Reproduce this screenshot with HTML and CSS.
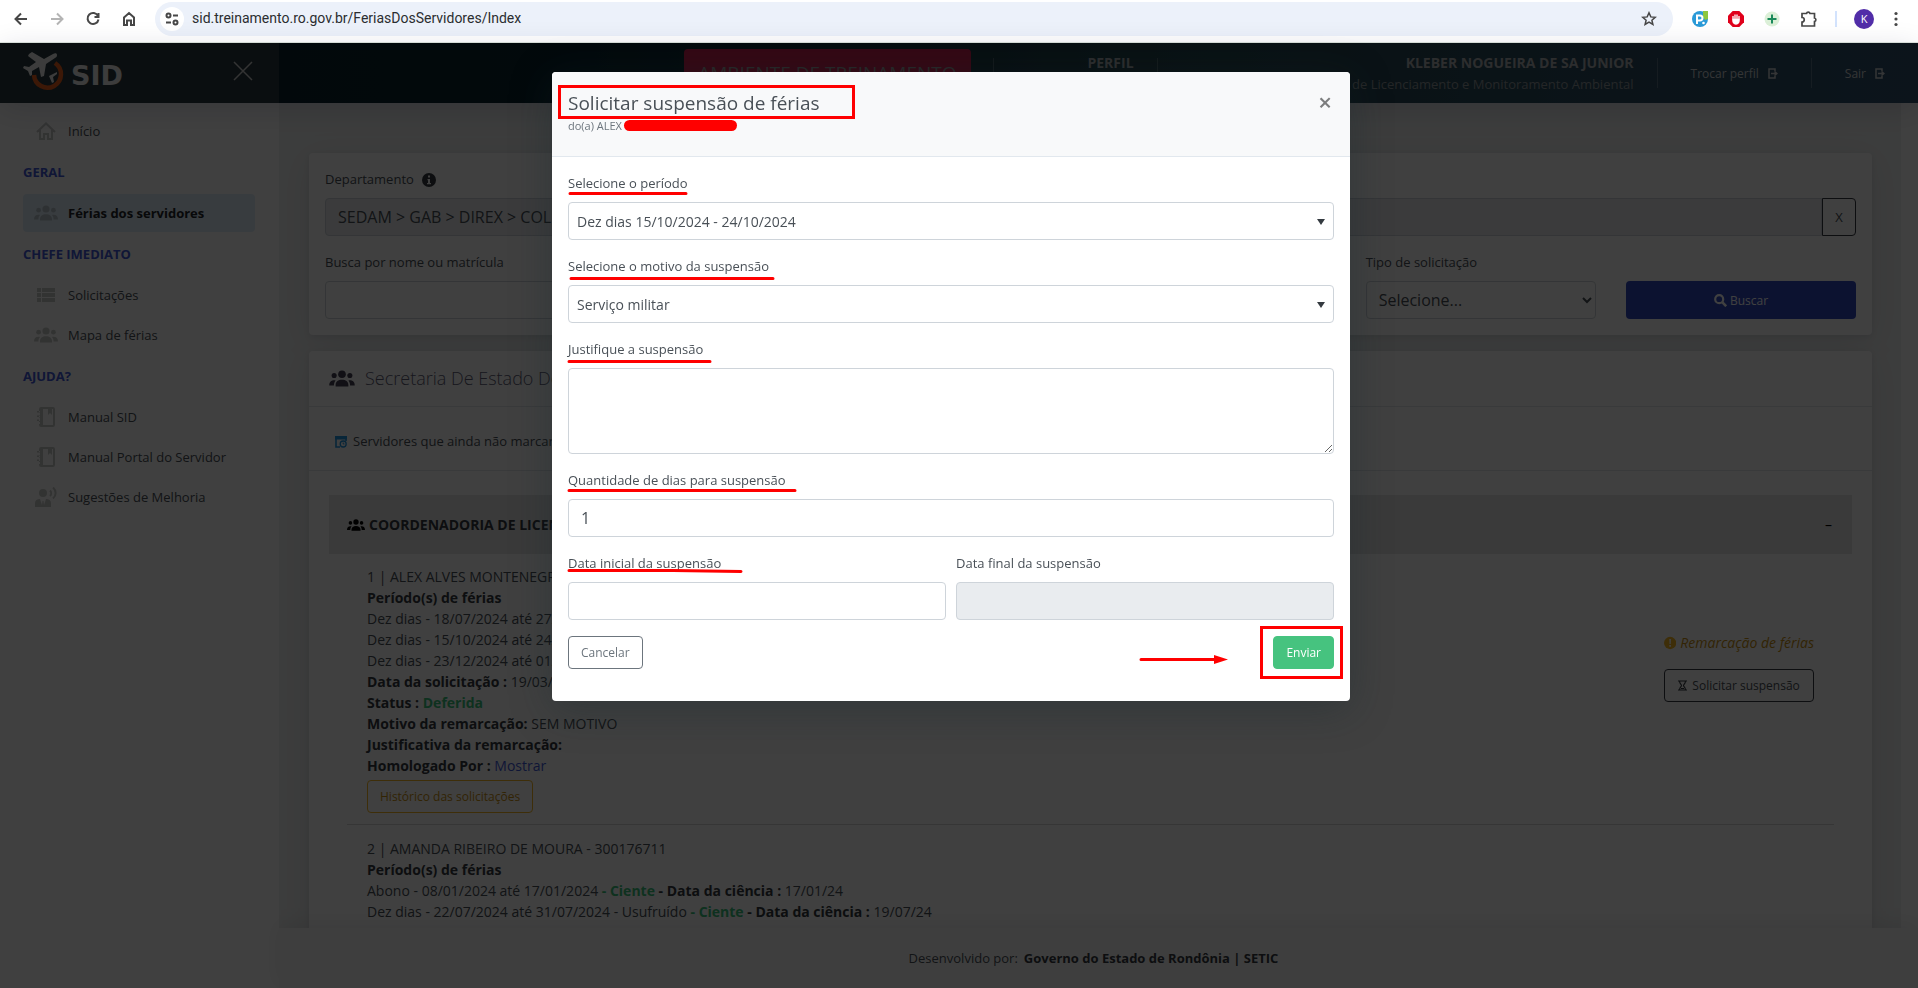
FILE: index.html
```html
<!DOCTYPE html>
<html lang="pt-BR">
<head>
<meta charset="utf-8">
<title>SID - Férias dos servidores</title>
<link rel="stylesheet" href="styles.css">
</head>
<body>
<svg class="defs" aria-hidden="true">
  <symbol id="users" viewBox="0 0 24 16">
    <circle cx="12" cy="4" r="3.6"/><circle cx="4.6" cy="5.2" r="2.4"/><circle cx="19.4" cy="5.2" r="2.4"/>
    <path d="M6 15.500v-1.500c0-3 2.500-4.800 6-4.800s6 1.800 6 4.800v1.500zM0 14.500c0-2.800 1.400-4.800 4.600-4.800.6 0 1 .1 1.400.2C4.900 11.200 4.400 12.600 4.400 14.500zM24 14.500c0-2.800-1.400-4.800-4.600-4.800-.6 0-1 .1-1.400.2 1.100 1.300 1.600 2.700 1.600 4.600z"/>
  </symbol>
  <symbol id="book" viewBox="0 0 18 20">
    <path fill-rule="evenodd" d="M4 0h12a2 2 0 0 1 2 2v16a2 2 0 0 1-2 2H4a2 2 0 0 1-2-2v-1h1v-2H2v-2.500h1v-2H2V8h1V6H2V2a2 2 0 0 1 2-2zm2 2v16h10V2h-1v6l-2-2-2 2V2zM0 4h3v1.500H0zM0 8.500h3V10H0zM0 12.500h3V14H0z"/>
  </symbol>
  <symbol id="exit" viewBox="0 0 10 11">
    <path fill="none" stroke="currentColor" stroke-width="1.500" d="M7 3V1H1v9h6V8"/><path d="M3 4.700h3.500V2.500l3.500 3-3.500 3V6.300H3z"/>
  </symbol>
</svg>

<div class="browser">
  <button class="nav-btn" aria-label="Voltar"><svg width="16" height="16" viewBox="0 0 16 16"><path d="M14 8H3M8 2.500L2.500 8 8 13.500"/></svg></button>
  <button class="nav-btn off" aria-label="Avançar"><svg width="16" height="16" viewBox="0 0 16 16"><path d="M2 8h11M8 2.500L13.500 8 8 13.500"/></svg></button>
  <button class="nav-btn" aria-label="Recarregar"><svg width="16" height="16" viewBox="0 0 16 16"><path d="M13 5A5.500 5.500 0 1 0 13.500 8.500M13.500 2v4h-4"/></svg></button>
  <button class="nav-btn" aria-label="Página inicial"><svg width="16" height="16" viewBox="0 0 16 16"><path d="M3 6.500L8 2l5 4.500V14h-3v-4.500H6V14H3z"/></svg></button>
  <div class="address">
    <span class="site-info"><svg width="14" height="14" viewBox="0 0 14 14"><circle cx="3.500" cy="3.500" r="2"/><path d="M8 3.500h5M1 10.500h5"/><circle cx="10.500" cy="10.500" r="2"/></svg></span>
    <input class="url" aria-label="Endereço" value="sid.treinamento.ro.gov.br/FeriasDosServidores/Index">
    <button class="star" aria-label="Favoritar"><svg width="16" height="16" viewBox="0 0 16 16"><path d="M8 1.800l1.800 4.100 4.400.4-3.300 2.900 1 4.300L8 11.200l-3.900 2.300 1-4.300-3.300-2.900 4.400-.4z"/></svg></button>
  </div>
  <div class="extensions">
    <svg width="16" height="16" viewBox="0 0 16 16"><circle cx="8" cy="8" r="8" fill="#2a9ad8"/><path d="M11 0h5v8l-3 1-2-3z" fill="#8cc63f"/><path d="M5 13V4.500h3a2.300 2.300 0 0 1 0 5H5" fill="none" stroke="#fff" stroke-width="2"/><circle cx="11.500" cy="12" r="1.300" fill="#fff"/></svg>
    <svg width="16" height="16" viewBox="0 0 16 16"><path d="M4.700 0h6.600L16 4.700v6.600L11.300 16H4.700L0 11.300V4.700z" fill="#e0001b"/><path d="M5 9.500V5M7 8V3.500M9 8V3.500M11 9V5M4.800 8.500h6.400c0 2.500-1 4.500-3.200 4.500s-3.200-2-3.200-4.500z" fill="#fff" stroke="#fff" stroke-width="1.300"/></svg>
    <svg width="16" height="16" viewBox="0 0 16 16"><circle cx="8" cy="8" r="7.500" fill="#dcf0d8"/><path d="M8 3.500v9M3.500 8h9" stroke="#1b8a5a" stroke-width="2"/></svg>
    <svg width="18" height="18" viewBox="0 0 18 18"><path d="M2 3.500h4.500a1.800 1.800 0 0 1 3.500 0h4.500V8a1.800 1.800 0 0 1 0 3.500v4.500H2v-4a2.200 2.200 0 0 0 0-4.500z" fill="none" stroke="#474747" stroke-width="1.700"/></svg>
    <span class="bar"></span>
    <button class="avatar" aria-label="Perfil">K</button>
    <button class="menu" aria-label="Menu"><svg width="4" height="16" viewBox="0 0 4 16" fill="#474747"><circle cx="2" cy="2.500" r="1.600"/><circle cx="2" cy="8" r="1.600"/><circle cx="2" cy="13.500" r="1.600"/></svg></button>
  </div>
</div>

<div class="app">
  <header class="top">
    <div class="brand">
      <svg class="logo" width="46" height="42" viewBox="0 0 46 42">
        <path d="M32 11a13.500 13.500 0 1 1-21 12" fill="none" stroke="#f0601c" stroke-width="4.500"/>
        <g fill="#f0f0f0"><path d="M6 2l3-2 12 7 9-5c2-1 4-1 4 1s-1 2-2 3l-9 6-2 12-3 1-2-10-7 4v4l-2 1-2-5-5-3 1-2 5 1 7-5L5 4z"/><path d="M34 20l-8 4 3 7 2-1-1-5 4-3z"/></g>
      </svg>
      <span class="brand-name">SID</span>
      <button class="side-close" aria-label="Fechar menu"><svg width="20" height="20" viewBox="0 0 20 20"><path d="M1 1l18 18M19 1L1 19"/></svg></button>
    </div>
    <div class="top-right">
      <span class="env">AMBIENTE DE TREINAMENTO</span>
      <div class="cell profile"><strong>PERFIL</strong></div>
      <div class="cell user"><strong>KLEBER NOGUEIRA DE SA JUNIOR</strong><span>Coordenadoria de Licenciamento e Monitoramento Ambiental</span></div>
      <a class="cell link" href="#">Trocar perfil <svg width="10" height="11"><use href="#exit"/></svg></a>
      <a class="cell link" href="#">Sair <svg width="10" height="11"><use href="#exit"/></svg></a>
    </div>
  </header>
  <div class="body">
    <nav class="side">
      <a href="#"><span class="ico"><svg width="20" height="18" viewBox="0 0 20 18"><path d="M1 10l9-8.500L19 10M4 8v9h4v-5h4v5h4V8" fill="none" stroke="#c8cac8" stroke-width="2"/></svg></span>Início</a>
      <h2>GERAL</h2>
      <a href="#" class="active"><span class="ico"><svg width="24" height="16"><use href="#users"/></svg></span>Férias dos servidores</a>
      <h2>CHEFE IMEDIATO</h2>
      <a href="#"><span class="ico"><svg width="18" height="14" viewBox="0 0 18 14"><path d="M0 0h4v4H0zM5 0h13v4H5zM0 5h4v4H0zM5 5h13v4H5zM0 10h4v4H0zM5 10h13v4H5z"/></svg></span>Solicitações</a>
      <a href="#"><span class="ico"><svg width="24" height="16"><use href="#users"/></svg></span>Mapa de férias</a>
      <h2>AJUDA?</h2>
      <a href="#"><span class="ico"><svg width="18" height="20"><use href="#book"/></svg></span>Manual SID</a>
      <a href="#"><span class="ico"><svg width="18" height="20"><use href="#book"/></svg></span>Manual Portal do Servidor</a>
      <a href="#"><span class="ico"><svg width="22" height="20" viewBox="0 0 22 20"><circle cx="8" cy="6" r="4"/><path d="M0 20v-4c0-2.500 2-4 5-4l2 6 .5-4h1l.5 4 2-6c3 0 5 1.500 5 4v4z"/><path d="M15 3.500c1.500 1.500 1.500 4 0 5.500M18 0.500c3.500 3 3.500 8 0 11" fill="none" stroke="#c8cac8" stroke-width="2"/></svg></span>Sugestões de Melhoria</a>
    </nav>
    <div class="main">
      <main class="content">
        <form class="card filter">
          <div class="field wide">
            <label for="dep">Departamento <svg width="14" height="14" viewBox="0 0 14 14"><circle cx="7" cy="7" r="7" fill="#343a40"/><path d="M6 2.500h2v2H6zM5.500 6H8v4h1v1.300H5V10h1V7.300h-.5z" fill="#fff"/></svg></label>
            <div class="group"><input id="dep" class="control" readonly value="SEDAM &gt; GAB &gt; DIREX &gt; COLMAM"><button type="button" class="clear">X</button></div>
          </div>
          <div class="field name"><label for="busca">Busca por nome ou matrícula</label><input id="busca" class="control"></div>
          <div class="field"><label for="tipo">Tipo de solicitação</label><select id="tipo" class="control"><option>Selecione...</option></select></div>
          <button type="button" class="search"><svg width="13" height="13" viewBox="0 0 13 13"><circle cx="5.200" cy="5.200" r="4" fill="none" stroke="#fff" stroke-width="2.200"/><path d="M8.200 8.200l4 4" stroke="#fff" stroke-width="2.600"/></svg> Buscar</button>
        </form>
        <section class="card list">
          <h1><svg width="26" height="17"><use href="#users"/></svg>Secretaria De Estado Do Desenvolvimento Ambiental</h1>
          <div class="pending"><svg width="12" height="13" viewBox="0 0 12 13"><path d="M5 12H1V2h10v4" fill="none" stroke="#2196e3" stroke-width="1.600"/><path d="M0 1h12v3.500H0z" fill="#2196e3"/><circle cx="8.200" cy="9" r="3" fill="#fff" stroke="#2196e3" stroke-width="1.300"/><path d="M8.200 7.500V9h1.200" fill="none" stroke="#2196e3"/></svg> Servidores que ainda não marcaram férias</div>
          <div class="unit"><svg width="18" height="14" viewBox="0 0 24 16"><use href="#users"/></svg><strong>COORDENADORIA DE LICENCIAMENTO</strong><span class="minus">–</span></div>
          <article class="person">
            <div class="lines">
              <p>1 | ALEX ALVES MONTENEGRO</p>
              <p><strong>Período(s) de férias</strong></p>
              <p>Dez dias - 18/07/2024 até 27/07/2024</p>
              <p>Dez dias - 15/10/2024 até 24/10/2024</p>
              <p>Dez dias - 23/12/2024 até 01/01/2025</p>
              <p><strong>Data da solicitação :</strong> 19/03/24</p>
              <p><strong>Status : <span class="ok">Deferida</span></strong></p>
              <p><strong>Motivo da remarcação:</strong> SEM MOTIVO</p>
              <p><strong>Justificativa da remarcação:</strong></p>
              <p><strong>Homologado Por :</strong> <a href="#">Mostrar</a></p>
              <button type="button" class="history">Histórico das solicitações</button>
            </div>
            <div class="actions">
              <em><svg width="14" height="14" viewBox="0 0 14 14"><circle cx="7" cy="7" r="7" fill="#f7b924"/><path d="M6 2.500h2L7.700 8H6.300zM6 9.200h2v2H6z" fill="#fff"/></svg> Remarcação de férias</em>
              <button type="button" class="suspend"><svg width="9" height="11" viewBox="0 0 9 11"><path d="M0 1h9M0 10h9M1.500 1c0 3 2 3.500 2 4.500s-2 1.500-2 4.500M7.500 1c0 3-2 3.500-2 4.500s2 1.500 2 4.500M3 8.500h3" fill="none" stroke="#343a40" stroke-width="1.100"/></svg> Solicitar suspensão</button>
            </div>
          </article>
          <article class="person">
            <div class="lines">
              <p>2 | AMANDA RIBEIRO DE MOURA - 300176711</p>
              <p><strong>Período(s) de férias</strong></p>
              <p>Abono - 08/01/2024 até 17/01/2024 <strong><span class="ok">- Ciente</span> - Data da ciência :</strong> 17/01/24</p>
              <p>Dez dias - 22/07/2024 até 31/07/2024 - Usufruído <strong><span class="ok">- Ciente</span> - Data da ciência :</strong> 19/07/24</p>
            </div>
          </article>
        </section>
      </main>
      <footer>Desenvolvido por: <strong>Governo do Estado de Rondônia | SETIC</strong></footer>
    </div>
  </div>
</div>

<div class="backdrop">
  <div class="modal" role="dialog" aria-labelledby="mt">
    <div class="modal-head">
      <div><h5 id="mt">Solicitar suspensão de férias</h5><small>do(a) ALEX</small></div>
      <button class="x" aria-label="Fechar">×</button>
    </div>
    <form class="modal-body">
      <div class="field"><label for="per">Selecione o período</label><div class="pick"><select id="per" class="control"><option>Dez dias 15/10/2024 - 24/10/2024</option></select></div></div>
      <div class="field"><label for="mot">Selecione o motivo da suspensão</label><div class="pick"><select id="mot" class="control"><option>Serviço militar</option></select></div></div>
      <div class="field"><label for="jus">Justifique a suspensão</label><textarea id="jus" class="control"></textarea></div>
      <div class="field"><label for="qtd">Quantidade de dias para suspensão</label><input id="qtd" class="control" value="1"></div>
      <div class="pair">
        <div class="field"><label for="ini">Data inicial da suspensão</label><input id="ini" class="control"></div>
        <div class="field"><label for="fim">Data final da suspensão</label><input id="fim" class="control" readonly></div>
      </div>
      <div class="buttons"><button type="button" class="cancel">Cancelar</button><button type="button" class="send">Enviar</button></div>
    </form>
    <svg class="marks" width="798" height="630" viewBox="0 0 798 630" fill="none" stroke="#f00" stroke-width="3" aria-hidden="true">
      <rect x="7.500" y="14.500" width="294" height="31"/>
      <rect x="72" y="48" width="113" height="11" rx="5.500" fill="#f00" stroke="none"/>
      <g stroke-linecap="round"><path d="M18 121.500h116M19 206.500h202M17 289.500h141M17 418.500h226M17 498.500h104l68 1M589 587.500h76"/></g>
      <path d="M662 583l14 4.500-14 4.500z" fill="#f00" stroke="none"/>
      <rect x="709.500" y="555.500" width="80" height="50"/>
    </svg>
  </div>
</div>
</body>
</html>
```
FILE: styles.css
```css
* { box-sizing: border-box; }
body {
  margin: 0;
  height: 100vh;
  display: flex;
  flex-direction: column;
  overflow: hidden;
  font: 13px/21px "Open Sans", "Noto Sans", sans-serif;
  color: #495057;
}
button, input, select, textarea { font: inherit; color: inherit; margin: 0; }
button { cursor: pointer; }
h1, h2, h5, p { margin: 0; font-weight: 400; }
a { color: inherit; text-decoration: none; }
.defs { position: absolute; width: 0; height: 0; }

/* Browser toolbar */
.browser {
  flex: none;
  height: 43px;
  display: flex;
  align-items: center;
  padding: 0 20px 5px 13px;
  background: #fff;
  border-bottom: 1px solid #dfe6df;
}
.browser button { border: 0; background: none; padding: 0; display: flex; }
.nav-btn { width: 16px; margin-right: 20px; }
.nav-btn svg, .star svg, .site-info svg { fill: none; stroke: #474747; stroke-width: 2; }
.off svg { stroke: #b4b4b4; }
.address {
  flex: 1;
  height: 34px;
  display: flex;
  align-items: center;
  padding: 0 16px 0 5px;
  margin: 0 19px 0 -2px;
  border-radius: 17px;
  background: #ecf1fa;
}
.site-info {
  width: 24px;
  height: 24px;
  border-radius: 50%;
  background: #fff;
  display: flex;
  align-items: center;
  justify-content: center;
}
.url { flex: 1; border: 0; background: none; padding: 0 8px; color: #2b2d30; outline: 0; font-family: Roboto, sans-serif; font-size: 14px; }
.star svg { stroke-width: 1.5px; }
.extensions { display: flex; align-items: center; gap: 20px; }
.bar { width: 2px; height: 16px; background: #d3e3fd; margin: 0 -3px; }
.browser .avatar {
  width: 20px;
  height: 20px;
  border-radius: 50%;
  background: #512da8;
  color: #fff;
  font-size: 11px;
  align-items: center;
  justify-content: center;
}

/* Application */
.app { flex: 1; min-height: 0; display: flex; flex-direction: column; position: relative; background: #fff; }
.app::after { content: ""; position: absolute; inset: 0; z-index: 2; background: rgba(0, 0, 0, .75); }
.top {
  flex: none;
  height: 60px;
  display: flex;
  background: linear-gradient(90deg, #08202a, #0a2630 30%, #26464e 60%, #30526e);
  color: #d0d4d6;
  box-shadow: 0 6px 30px rgba(8, 10, 60, .14);
  z-index: 1;
}
.brand { width: 279px; display: flex; align-items: center; padding: 0 26px 0 23px; background: #283a40; }
.brand-name { font: bold 27px/30px "DejaVu Sans", sans-serif; color: #f0f0f0; margin: 6px 0 0 2px; }
.side-close { margin-left: auto; border: 0; background: none; padding: 0 0 4px; display: flex; }
.side-close svg { stroke: #d0d0d0; stroke-width: 1.5px; }
.top-right { flex: 1; display: flex; justify-content: flex-end; align-items: center; }
.env {
  background: #d02050;
  color: #a0a0a0;
  font-size: 19px;
  line-height: 48px;
  padding: 0 14px;
  border-radius: 4px;
  margin-right: 22px;
  white-space: nowrap;
}
.cell { border-left: 1px solid rgba(255, 255, 255, .2); height: 30px; display: flex; white-space: nowrap; }
.profile { width: 164px; padding-right: 23px; justify-content: flex-end; }
.user { width: 500px; padding-right: 23px; flex-direction: column; align-items: flex-end; }
.cell strong { font-size: 14px; line-height: 10px; color: #b0b4b6; }
.user span { color: #90989c; line-height: 32px; }
.link { align-items: center; gap: 9px; padding: 0 33px; font-size: 12px; }
.link svg { fill: currentColor; }

.body { flex: 1; min-height: 0; display: flex; }
.side { flex: none; width: 279px; padding: 9px 24px 0 23px; display: flex; flex-direction: column; gap: 2px; box-shadow: 7px 0 60px rgba(8, 10, 30, .06); }
.side a { height: 38px; display: flex; align-items: center; border-radius: 4px; }
.side .active { background: #dfeefa; color: #212529; font-weight: 700; }
.side h2 { height: 40px; font-size: 13px; line-height: 40px; font-weight: 700; color: #4058d8; }
.ico { width: 45px; display: flex; justify-content: center; }
.ico svg { fill: #c8cac8; }
.active .ico svg { fill: #b8c4cc; }

.main { flex: 1; min-width: 0; display: flex; flex-direction: column; }
.content {
  flex: 1;
  min-height: 0;
  overflow: hidden;
  margin-right: 17px;
  padding: 50px 29px 0 30px;
  display: flex;
  flex-direction: column;
  gap: 16px;
  background: #f0f2f2;
}
.card { flex: none; background: #fff; border-radius: 4px; box-shadow: 0 7px 35px rgba(4, 9, 40, .08), 0 2px 6px rgba(4, 9, 40, .08); }
.filter { padding: 16px; display: grid; grid-template-columns: repeat(6, 1fr); column-gap: 30px; row-gap: 16px; align-items: end; }
.wide { grid-column: span 6; }
.name { grid-column: span 4; }
.field { display: flex; flex-direction: column; gap: 8px; }
.field label { display: flex; align-items: center; gap: 8px; }
.control { width: 100%; height: 38px; border: 1px solid #ced4da; border-radius: 4px; background: #fff; padding: 0 12px; font-size: 16px; }
.control[readonly] { background: #e9ecef; }
#tipo { padding: 0 8px; }
.group { display: flex; }
.group .control { border-radius: 4px 0 0 4px; }
.clear { flex: none; width: 34px; border: 1px solid #343a40; border-radius: 0 4px 4px 0; background: none; padding: 0; }
.search { height: 38px; border: 0; border-radius: 4px; background: #3048c0; color: #fff; font-size: 12px; }
.search svg { vertical-align: -2px; }

.list h1 { height: 56px; padding: 0 20px; display: flex; align-items: center; gap: 10px; font-size: 18px; font-weight: 300; color: #5c5c74; border-bottom: 1px solid #e4e7ea; }
.list h1 svg { fill: #444054; }
.pending { height: 64px; padding: 6px 26px 0; display: flex; align-items: center; gap: 6px; border-bottom: 1px solid #e4e7ea; }
.unit { margin: 24px 20px 0; height: 59px; padding: 0 20px 0 18px; display: flex; align-items: center; gap: 4px; background: #e8e8e8; font-size: 14px; color: #343a40; }
.minus { margin-left: auto; color: #000; }
.person { margin: 0 38px; padding: 12px 20px 11px; display: flex; border-bottom: 1px solid #d8d8d8; font-size: 14px; }
.person + .person { padding-top: 13px; }
.lines { flex: 1; }
.lines strong, footer strong { color: #343a40; }
.lines .ok { color: #3ac47d; }
.lines a { color: #3f5ad8; }
.history, .suspend, .cancel, .send { height: 33px; border: 1px solid; border-radius: 4px; background: none; font-size: 12px; padding: 0 12px; white-space: nowrap; }
.history { border-color: #f7b924; color: #c89010; margin-top: 4px; }
.actions { flex: none; width: 150px; padding-top: 66px; display: flex; flex-direction: column; gap: 16px; white-space: nowrap; }
.actions em { display: flex; align-items: center; gap: 4px; color: #c89010; }
.suspend { border-color: #343a40; }
.suspend svg { vertical-align: -1px; margin-right: 2px; }
footer { flex: none; height: 60px; display: flex; align-items: center; justify-content: center; gap: 6px; padding-right: 10px; background: #f8f8f8; box-shadow: 0 -4px 20px rgba(4, 9, 20, .08); z-index: 1; }

/* Dialog */
.backdrop { position: fixed; inset: 72px 0 0; display: flex; justify-content: center; align-items: flex-start; padding-right: 16px; z-index: 3; }
.modal { width: 100%; max-width: 798px; position: relative; background: #fff; border-radius: 4px; box-shadow: 0 8px 40px rgba(20, 36, 44, .35); }
.modal-head { height: 85px; display: flex; justify-content: space-between; padding: 16px; background: #f8f9fa; border-bottom: 1px solid #e2e8ee; border-radius: 4px 4px 0 0; }
.modal-head h5 { font-size: 19px; line-height: 30px; }
.modal-head small { display: block; font-size: 11px; line-height: 16px; color: #6c757d; }
.x { align-self: flex-start; border: 0; background: none; padding: 0; font-size: 24px; line-height: 28px; font-weight: 600; color: #7c7d7e; width: 18px; }
.modal-body { display: flex; flex-direction: column; gap: 16px; padding: 16px 16px 32px; }
.pick { position: relative; }
.pick select { appearance: none; padding: 0 8px; font-size: 14px; }
.pick::after { content: ""; position: absolute; right: 9px; top: 17px; border: 4px solid transparent; border-top: 6px solid #343a40; border-bottom: 0; }
textarea.control { height: 86px; resize: vertical; display: block; }
.pair { display: grid; grid-template-columns: 1fr 1fr; gap: 10px; }
.buttons { display: flex; justify-content: space-between; }
.cancel { border-color: #6c757d; color: #6c757d; }
.send { border-color: #46c37f; background: #46c37f; color: #fff; }
.marks { position: absolute; left: 0; top: 0; pointer-events: none; }
```
